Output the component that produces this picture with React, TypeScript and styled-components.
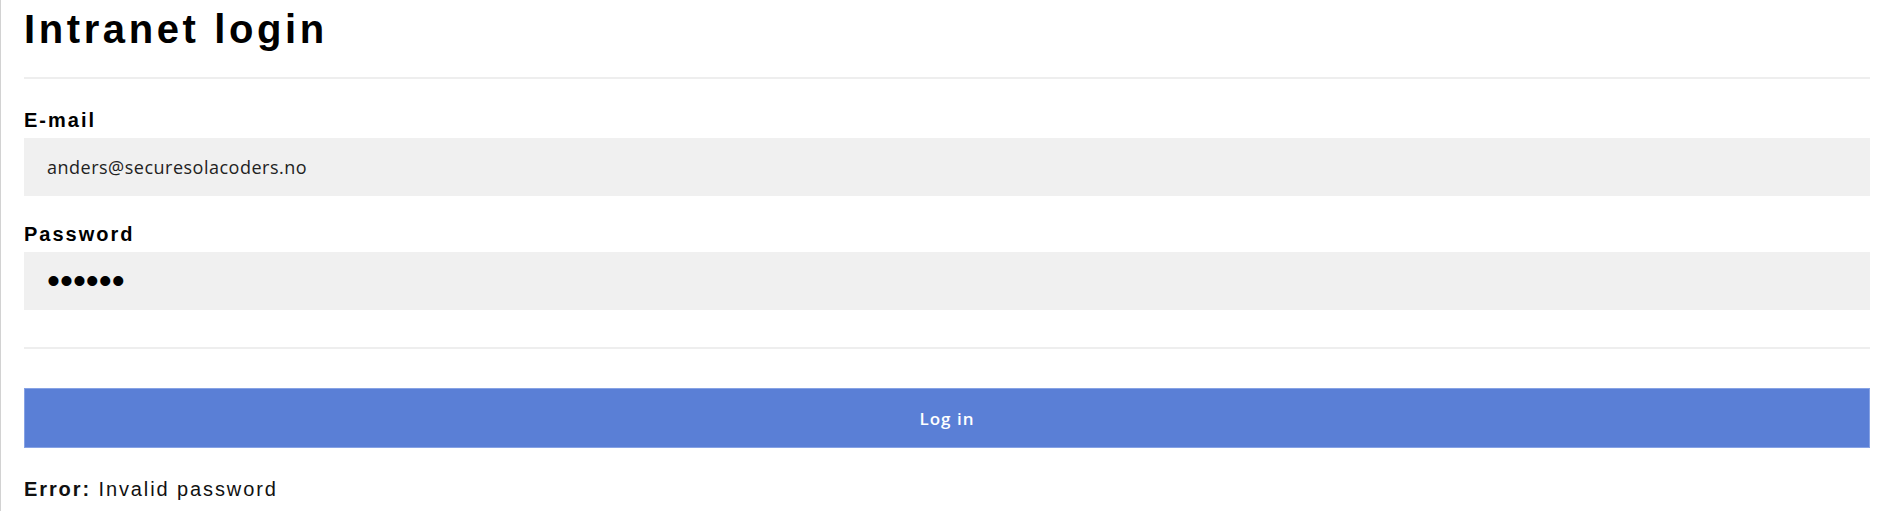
import React from "react";
import styled, { createGlobalStyle } from "styled-components";

const GlobalStyle = createGlobalStyle`
  html, body {
    margin: 0;
    padding: 0;
    background: #ffffff;
  }
  body {
    font-family: "Liberation Sans", Arial, sans-serif;
    color: #000;
  }
  * { box-sizing: border-box; }
`;

const Page = styled.div`
  min-height: 100vh;
  border-left: 1px solid #d2d2d2;
  padding: 5px 17px 0 23px;
  display: flex;
  flex-direction: column;
`;

const Title = styled.h1`
  margin: 0;
  font-size: 40px;
  line-height: 48px;
  font-weight: 700;
  letter-spacing: 0.09em;
  color: #000;
`;

const Divider = styled.hr<{ $top: number }>`
  margin: ${(p) => p.$top}px 0 0 0;
  border: none;
  height: 2px;
  background: #eeeeee;
`;

const Form = styled.form`
  display: flex;
  flex-direction: column;
`;

const Field = styled.div<{ $top: number }>`
  display: flex;
  flex-direction: column;
  gap: 6px;
  margin-top: ${(p) => p.$top}px;
`;

const Label = styled.label`
  font-size: 20px;
  line-height: 24px;
  font-weight: 700;
  letter-spacing: 0.1em;
  color: #000;
`;

const Input = styled.input<{ $mask?: boolean }>`
  height: 58px;
  width: 100%;
  border: none;
  outline: none;
  background: #f0f0f0;
  padding: 0 23px;
  font-family: ${(p) =>
    p.$mask ? `"Liberation Sans", Arial, sans-serif` : `"Open Sans", "Noto Sans", sans-serif`};
  font-size: ${(p) => (p.$mask ? "37px" : "18px")};
  letter-spacing: ${(p) => (p.$mask ? "0" : "0.5px")};
  color: ${(p) => (p.$mask ? "#000" : "#222")};
`;

const Button = styled.button`
  margin-top: 39px;
  height: 60px;
  width: 100%;
  background: #5a7fd6;
  border: 1px solid #86a2e4;
  color: #ffffff;
  font-family: "Open Sans", "Noto Sans", sans-serif;
  font-size: 17px;
  font-weight: 600;
  letter-spacing: 1px;
  cursor: pointer;
`;

const ErrorLine = styled.p`
  margin: 29px 0 0 0;
  font-size: 20px;
  line-height: 24px;
  letter-spacing: 0.095em;
  color: #111;
`;

const Strong = styled.strong`
  font-weight: 700;
`;

export default function App() {
  return (
    <>
      <GlobalStyle />
      <Page>
        <Title>Intranet login</Title>
        <Divider $top={24} />
        <Form onSubmit={(e) => e.preventDefault()}>
          <Field $top={29}>
            <Label htmlFor="email">E-mail</Label>
            <Input
              id="email"
              type="email"
              defaultValue="anders@securesolacoders.no"
            />
          </Field>
          <Field $top={26}>
            <Label htmlFor="password">Password</Label>
            <Input id="password" type="password" $mask defaultValue="secret" />
          </Field>
          <Divider $top={37} />
          <Button type="submit">Log in</Button>
        </Form>
        <ErrorLine>
          <Strong>Error:</Strong> Invalid password
        </ErrorLine>
      </Page>
    </>
  );
}
